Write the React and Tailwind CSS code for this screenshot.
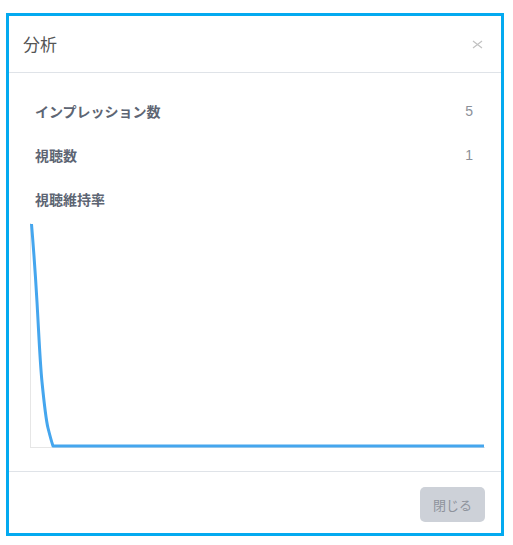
import React from 'react';

const stats = [
  { label: 'インプレッション数', value: '5' },
  { label: '視聴数', value: '1' },
  { label: '視聴維持率', value: '' },
];

const RetentionChart = () => {
  return (
    <svg width="455" height="226" viewBox="0 0 455 226" className="block">
      <line x1="0.5" y1="1" x2="0.5" y2="225" stroke="#e6e6e6" strokeWidth="1" />
      <line x1="0" y1="225.5" x2="455" y2="225.5" stroke="#e6e6e6" strokeWidth="1" />
      <path
        d="M1.5,2 C3,20 5,45 7,80 C9,115 10,140 12,160 C14,180 16,198 18,206 C20,214 21,218 23,224 L454,224"
        fill="none"
        stroke="#45a6ee"
        strokeWidth="3"
        strokeLinejoin="round"
      />
    </svg>
  );
};

const AnalyticsModal = () => {
  return (
    <div className="w-[498px] h-[523px] border-[3px] border-[#03aaf0] bg-white flex flex-col">
      <div className="h-[57px] shrink-0 flex items-center justify-between pl-[14px] pr-[18px] border-b border-[#dfe3e8]">
        <h2 className="text-[17px] text-[#555] font-normal">分析</h2>
        <button className="w-[11px] h-[10px] flex items-center justify-center">
          <svg width="11" height="9" viewBox="0 0 11 9">
            <path d="M1,1 L10,8 M10,1 L1,8" stroke="#c2c2c2" strokeWidth="1.2" fill="none" />
          </svg>
        </button>
      </div>

      <div className="flex-1 pt-[16px] pl-[21px]">
        {stats.map((s) => (
          <div key={s.label} className="h-[44px] flex items-center justify-between pl-[5px] pr-[28px]">
            <span className="text-[14px] font-bold text-[#5d6573]">{s.label}</span>
            <span className="text-[14px] text-[#8b9099]" style={{ fontFamily: '"Liberation Sans", sans-serif' }}>{s.value}</span>
          </div>
        ))}
        <div className="mt-[1px]">
          <RetentionChart />
        </div>
      </div>

      <div className="h-[62px] shrink-0 border-t border-[#dfe3e8] flex justify-end items-start pt-[15px] pr-[16px]">
        <button className="w-[65px] h-[35px] rounded-[5px] bg-[#cdd1d8] text-[13px] text-[#8d939c]">閉じる</button>
      </div>
    </div>
  );
};

export default function App() {
  return (
    <div
      className="w-[513px] h-[545px] bg-white pt-[13px] pl-[6px]"
      style={{ fontFamily: '"Noto Sans CJK JP", "Noto Sans", sans-serif' }}
    >
      <AnalyticsModal />
    </div>
  );
}
